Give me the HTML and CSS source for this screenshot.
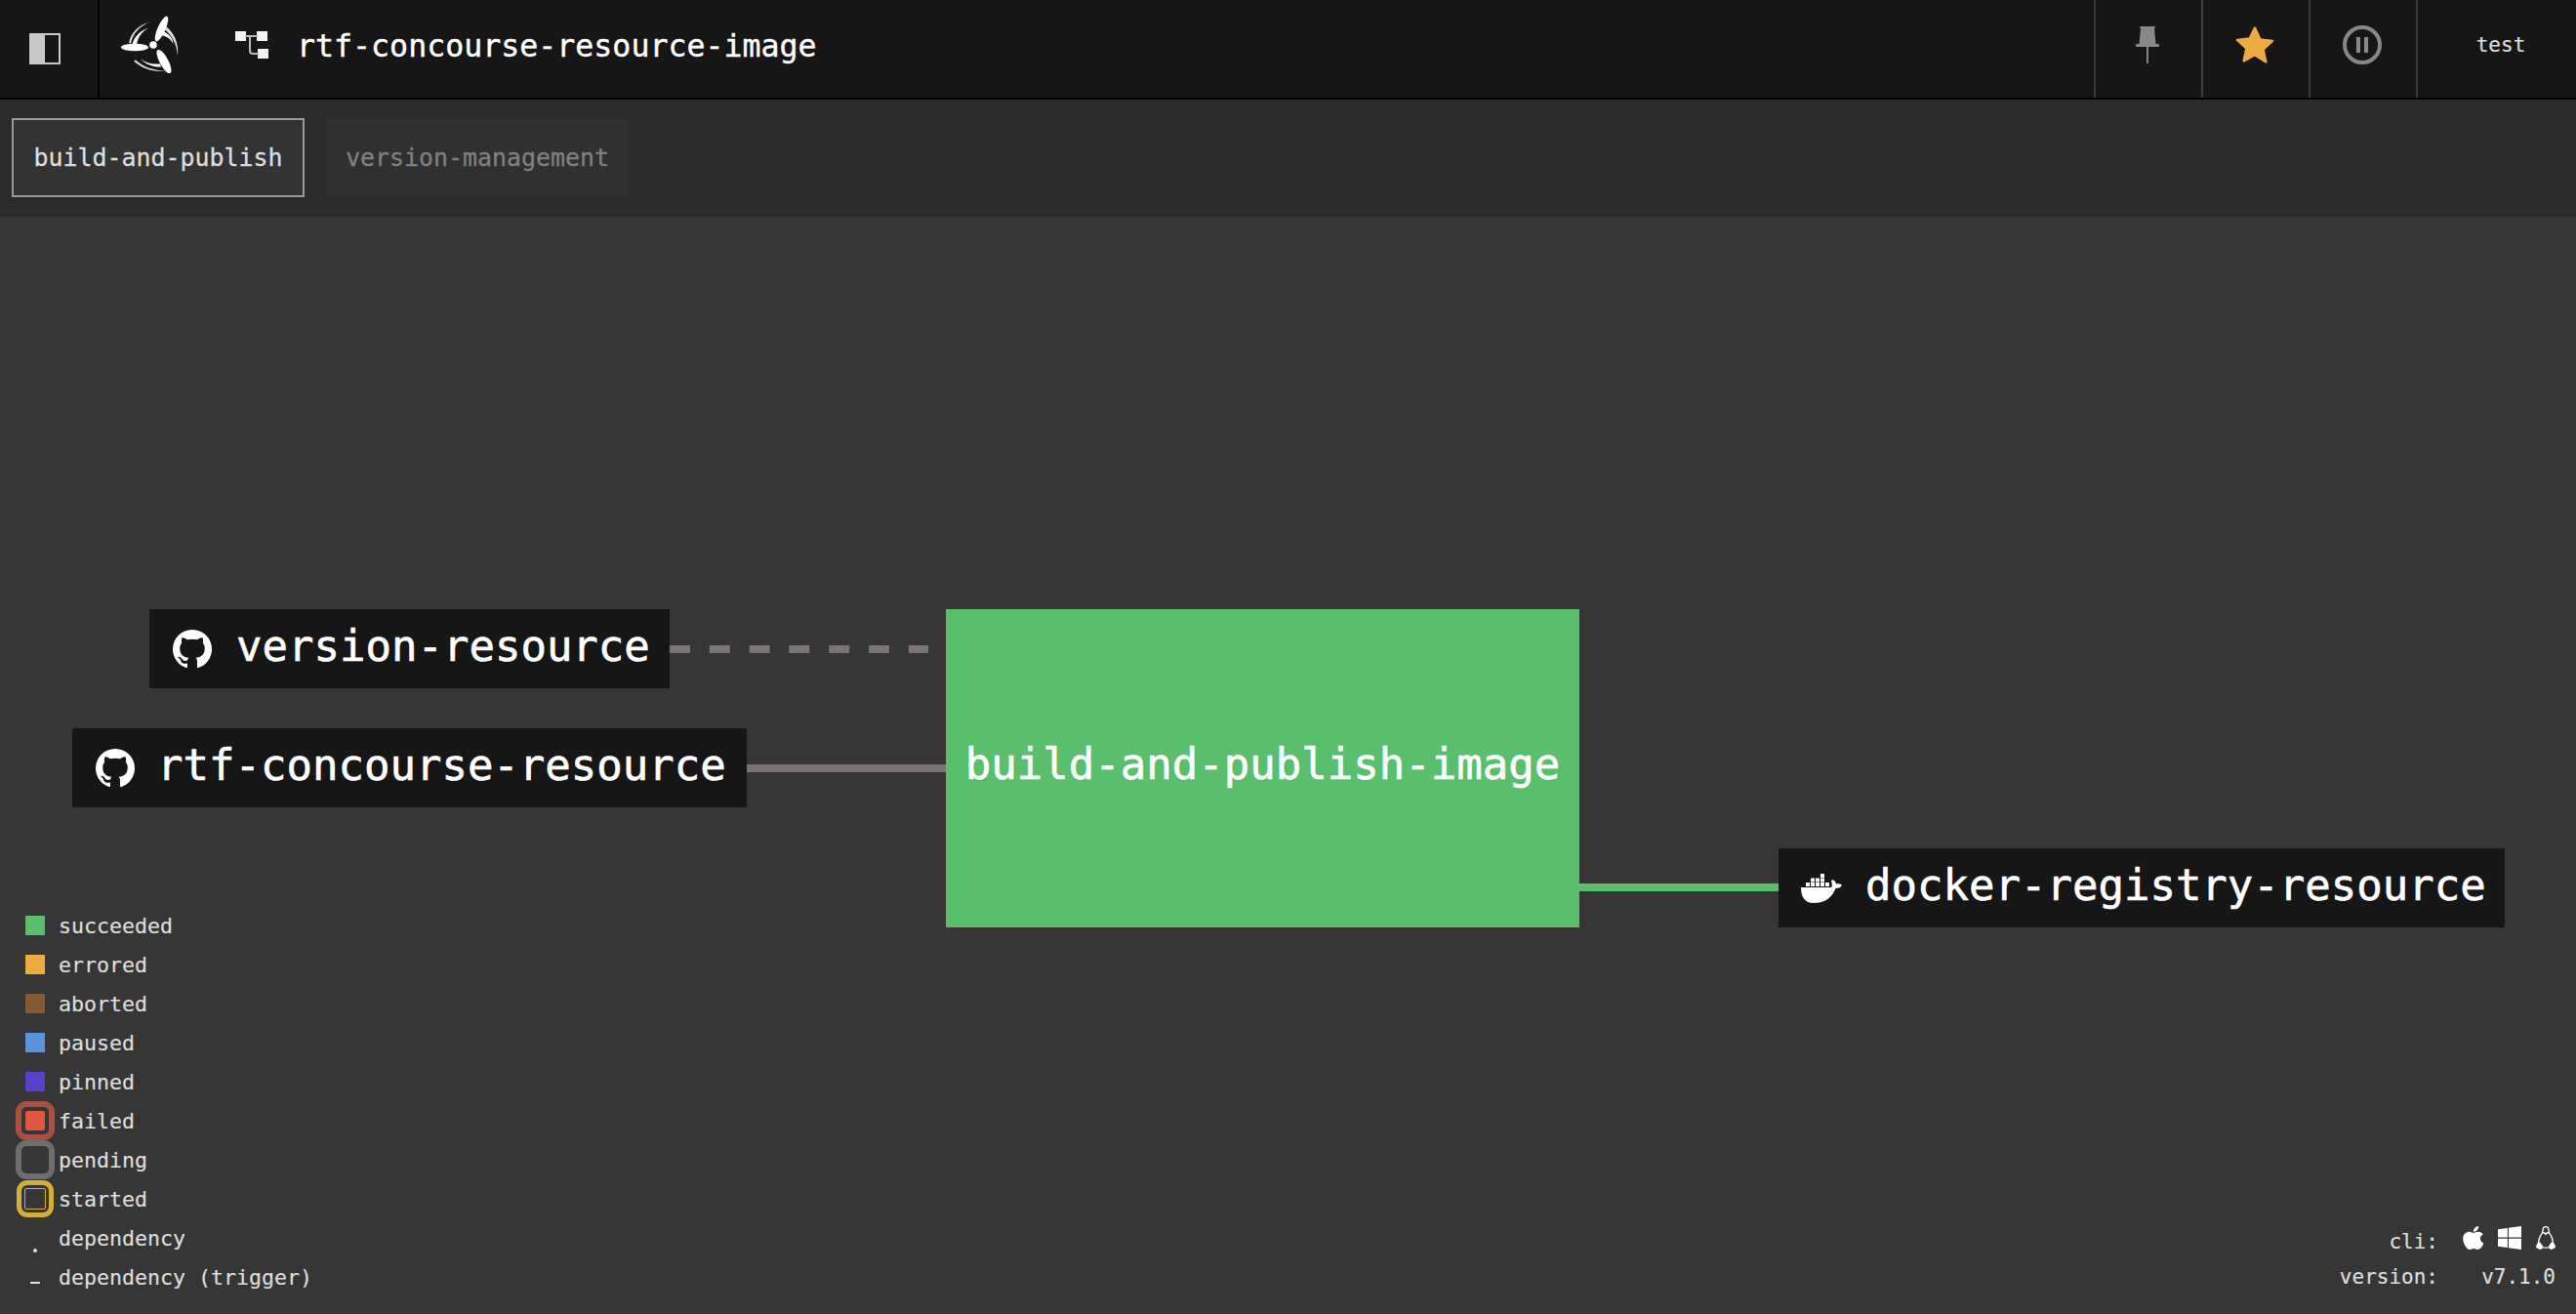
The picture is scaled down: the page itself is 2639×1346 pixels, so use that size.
FILE: index.html
```html
<!DOCTYPE html>
<html lang="en">
  <head>
    <meta charset="UTF-8" />
    <meta name="viewport" content="width=device-width, initial-scale=1.0" />
    <title>rtf-concourse-resource-image - Concourse</title>
    <link rel="stylesheet" href="styles.css">
  </head>
  <body>
    <header class="topbar">
      <div class="sidebar-toggle"><span class="toggle-icon"></span></div>
      <div class="logo">
        <svg width="62" height="60" viewBox="124 16 62 60" fill="#fff">
          <circle cx="157" cy="46" r="3.800" />
          <ellipse cx="138" cy="48.500" rx="14" ry="3.800" />
          <ellipse cx="165.500" cy="29.500" rx="4" ry="14" transform="rotate(24 165.500 29.500)" />
          <ellipse cx="168" cy="63" rx="4.500" ry="13.500" transform="rotate(-28 168 63)" />
          <!-- swirl arcs -->
          <path d="M132 44C134 33 143 25 154 22.500 144 26 136 34 134 44.500Z" opacity=".85" />
          <path d="M135.500 46C137 38 144 31 152 28.500 146 32 141 38 140 46Z" />
          <path d="M170 27C178 33 183.500 44 182 57 181 45 176 36 169 30.500Z" opacity=".85" />
          <path d="M167 32C172 34 177 38 177.500 45 175 40 171 37 165 36Z" />
          <path d="M137 62.500C146 71 158 74 170 72.500 158 72 147 69 139 61.500Z" opacity=".85" />
          <path d="M144 60C150 65 157 66 164 65.500L165 68.500C157 69 149 66 144 60Z" />
        </svg>
      </div>
      <svg class="pipeline-icon" width="34" height="30" viewBox="0 0 34 30" fill="#f2f2f2">
        <rect x="0" y="1" width="11" height="10" />
        <rect x="22" y="1" width="11" height="10" />
        <rect x="23" y="19" width="11" height="10" />
        <path d="M10 6h13M15 6v15q0 3 3 3h6" fill="none" stroke="#b9b9b9" stroke-width="2" />
      </svg>
      <h1 class="pipeline-name">rtf-concourse-resource-image</h1>
      <div class="topbar-actions">
        <div class="action">
          <svg width="24" height="38" viewBox="0 0 24 38" fill="#888">
            <rect x="4" y="0" width="16" height="2" rx="1" />
            <path d="M5 2h14l1.500 16h-17z" />
            <rect x="0" y="18" width="24" height="3" rx="1" />
            <rect x="11" y="20" width="2" height="18" />
          </svg>
        </div>
        <div class="action">
          <svg width="42" height="40" viewBox="0 0 42 40">
            <path d="M21 2.500l5.400 12 12.600 1.400-9.400 8.700 2.700 12.900L21 30.100 9.700 36.500l2.700-12.900L3 14.900l12.600-1.400z" fill="#eea940" stroke="#eea940" stroke-width="2.500" stroke-linejoin="round" />
          </svg>
        </div>
        <div class="action">
          <svg width="40" height="40" viewBox="0 0 40 40" fill="#888">
            <circle cx="20" cy="20" r="18" fill="none" stroke="#888" stroke-width="4" />
            <rect x="14" y="12" width="4" height="16" />
            <rect x="22" y="12" width="4" height="16" />
          </svg>
        </div>
        <div class="user">test</div>
      </div>
    </header>

    <nav class="groups">
      <a class="group group-active">build-and-publish</a>
      <a class="group">version-management</a>
    </nav>

    <main class="graph">
      <svg class="edges" width="2639" height="1124" viewBox="0 222 2639 1124" fill="none">
        <path class="edge-dashed" d="M686 665H951" />
        <path class="edge" d="M765 787H969" />
        <path class="edge-ok" d="M1618 909H1822" />
      </svg>

      <div class="node node-version">
        <svg class="node-icon" width="48" height="48" viewBox="0 0 24 24" fill="#fff"><path d="M12,2A10,10 0 0,0 2,12C2,16.42 4.87,20.17 8.84,21.5C9.34,21.58 9.5,21.27 9.5,21C9.5,20.77 9.5,20.14 9.5,19.31C6.73,19.91 6.14,17.97 6.14,17.97C5.68,16.81 5.03,16.5 5.03,16.5C4.12,15.88 5.1,15.9 5.1,15.9C6.1,15.97 6.63,16.93 6.63,16.93C7.5,18.45 8.97,18 9.54,17.76C9.63,17.11 9.89,16.67 10.17,16.42C7.95,16.17 5.62,15.31 5.62,11.5C5.62,10.39 6,9.5 6.65,8.79C6.55,8.54 6.2,7.5 6.75,6.15C6.75,6.15 7.59,5.88 9.5,7.17C10.29,6.95 11.15,6.84 12,6.84C12.85,6.84 13.71,6.95 14.5,7.17C16.41,5.88 17.25,6.15 17.25,6.15C17.8,7.5 17.45,8.54 17.35,8.79C18,9.5 18.38,10.39 18.38,11.5C18.38,15.32 16.04,16.16 13.81,16.41C14.17,16.72 14.5,17.33 14.5,18.26C14.5,19.6 14.5,20.68 14.5,21C14.5,21.27 14.66,21.59 15.17,21.5C19.14,20.16 22,16.42 22,12A10,10 0 0,0 12,2Z" /></svg>
        <span>version-resource</span>
      </div>
      <div class="node node-rtf">
        <svg class="node-icon" width="48" height="48" viewBox="0 0 24 24" fill="#fff"><path d="M12,2A10,10 0 0,0 2,12C2,16.42 4.87,20.17 8.84,21.5C9.34,21.58 9.5,21.27 9.5,21C9.5,20.77 9.5,20.14 9.5,19.31C6.73,19.91 6.14,17.97 6.14,17.97C5.68,16.81 5.03,16.5 5.03,16.5C4.12,15.88 5.1,15.9 5.1,15.9C6.1,15.97 6.63,16.93 6.63,16.93C7.5,18.45 8.97,18 9.54,17.76C9.63,17.11 9.89,16.67 10.17,16.42C7.95,16.17 5.62,15.31 5.62,11.5C5.62,10.39 6,9.5 6.65,8.79C6.55,8.54 6.2,7.5 6.75,6.15C6.75,6.15 7.59,5.88 9.5,7.17C10.29,6.95 11.15,6.84 12,6.84C12.85,6.84 13.71,6.95 14.5,7.17C16.41,5.88 17.25,6.15 17.25,6.15C17.8,7.5 17.45,8.54 17.35,8.79C18,9.5 18.38,10.39 18.38,11.5C18.38,15.32 16.04,16.16 13.81,16.41C14.17,16.72 14.5,17.33 14.5,18.26C14.5,19.6 14.5,20.68 14.5,21C14.5,21.27 14.66,21.59 15.17,21.5C19.14,20.16 22,16.42 22,12A10,10 0 0,0 12,2Z" /></svg>
        <span>rtf-concourse-resource</span>
      </div>
      <div class="job">build-and-publish-image</div>
      <div class="node node-docker">
        <svg class="node-icon" width="42" height="30" viewBox="0 0 42 30" fill="#fff">
          <path d="M0 14h31c1-1 1-4 0-7l1.500-1c2 1 3.500 3 3.500 4.500 2-.5 4.500 0 6 1-1 2.500-3 3.500-6.500 3.500C32 24 25 30 13 30 4 30 0 24 0 14z" />
          <g>
            <rect x="5" y="9" width="4" height="4" />
            <rect x="10" y="9" width="4" height="4" />
            <rect x="15" y="9" width="4" height="4" />
            <rect x="20" y="9" width="4" height="4" />
            <rect x="25" y="9" width="4" height="4" />
            <rect x="10" y="4.500" width="4" height="4" />
            <rect x="15" y="4.500" width="4" height="4" />
            <rect x="20" y="4.500" width="4" height="4" />
            <rect x="20" y="0" width="4" height="4" />
          </g>
        </svg>
        <span>docker-registry-resource</span>
      </div>

      <ul class="legend">
        <li><span class="key"><i class="swatch succeeded"></i></span>succeeded</li>
        <li><span class="key"><i class="swatch errored"></i></span>errored</li>
        <li><span class="key"><i class="swatch aborted"></i></span>aborted</li>
        <li><span class="key"><i class="swatch paused"></i></span>paused</li>
        <li><span class="key"><i class="swatch pinned"></i></span>pinned</li>
        <li><span class="key"><i class="ring ring-failed"><i class="swatch failed"></i></i></span>failed</li>
        <li><span class="key"><i class="ring ring-pending"></i></span>pending</li>
        <li><span class="key"><i class="ring ring-started"><i class="inner-started"></i></i></span>started</li>
        <li><span class="key"><i class="dep-dot"></i></span>dependency</li>
        <li><span class="key"><i class="dep-dash"></i></span>dependency (trigger)</li>
      </ul>

      <div class="info">
        <span>cli:</span>
        <span class="cli-icons">
          <svg width="21" height="24" viewBox="0 30 372 452" preserveAspectRatio="none" fill="#fff"><path d="M318.7 268.7c-.2-36.7 16.4-64.4 50-84.8-18.8-26.9-47.2-41.7-84.7-44.6-35.5-2.8-74.3 20.7-88.5 20.7-15 0-49.4-19.7-76.4-19.7C63.3 141.2 4 184.8 4 273.5q0 39.3 14.4 81.2c12.8 36.7 59 126.7 107.2 125.2 25.2-.6 43-17.9 75.8-17.9 31.8 0 48.3 17.9 76.4 17.9 48.6-.7 90.4-82.5 102.6-119.3-65.2-30.7-61.7-90-61.7-91.9zm-56.6-164.2c27.3-32.4 24.8-61.9 24-72.5-24.1 1.4-52 16.400-67.9 34.900-17.5 19.800-27.800 44.300-25.600 71.900 26.100 2 49.900-11.400 69.500-34.300z" /></svg>
          <svg width="24" height="24" viewBox="0 32 448 448" preserveAspectRatio="none" fill="#fff"><path d="M0 93.7l183.6-25.3v177.4H0V93.7zm0 324.6l183.6 25.3V268.4H0v149.9zm203.8 28L448 480V268.4H203.8v177.9zm0-380.6v180.1H448V32L203.8 65.7z" /></svg>
          <svg width="20" height="24" viewBox="0 0 20 24" fill="none" stroke="#fff" stroke-width="1.300" stroke-linejoin="round">
            <path d="M10 .7c-2.300 0-3 1.800-3 3.800 0 2.500-1.200 3.300-2.400 5.400-1.300 2.300-2 4.600-1.800 7.100" />
            <path d="M10 .7c2.300 0 3 1.800 3 3.800 0 2.500 1.200 3.300 2.400 5.400 1.300 2.300 2 4.600 1.800 7.100" />
            <path d="M7.300 6.500c1.500 1 3.900 1 5.400 0L10 8.300z" fill="#fff" />
            <path d="M.8 20c1-.6 1.500-2.300 2-3.400 1 .2 2.100 1.800 3.100 3.300.8 1.400.3 3-1.100 3.300-1.300.2-2.500-1-4-1.500zM19.200 20c-1-.6-1.500-2.300-2-3.400-1 .2-2.100 1.800-3.100 3.300-.8 1.400-.3 3 1.100 3.300 1.300.2 2.500-1 4-1.500z" fill="#fff" />
            <path d="M6 21.500c2.500.9 5.500.9 8 0" />
          </svg>
        </span>
        <span>version:</span>
        <span>v7.1.0</span>
      </div>
    </main>
  </body>
</html>
```

FILE: styles.css
```css
* {
  box-sizing: border-box;
}
html,
body {
  height: 100%;
}
body {
  margin: 0;
  display: flex;
  flex-direction: column;
  overflow: hidden;
  background-color: #363636;
  color: #ddd;
  font-family: "DejaVu Sans Mono", "Liberation Mono", monospace;
}

/* top bar */
.topbar {
  flex: none;
  display: flex;
  align-items: center;
  height: 102px;
  background-color: #161616;
  border-bottom: 2px solid #000;
}
.sidebar-toggle {
  display: flex;
  align-items: center;
  justify-content: center;
  width: 102px;
  height: 100px;
  padding-right: 8px;
  border-right: 2px solid #000;
}
.toggle-icon {
  width: 32px;
  height: 32px;
  border: 2px solid #c8c8c8;
  background: linear-gradient(to right, #c8c8c8 14px, transparent 14px);
}
.logo {
  display: flex;
  margin-left: 22px;
  margin-top: -8px;
}
.pipeline-icon {
  margin-left: 55px;
  margin-top: -8px;
}
.pipeline-name {
  margin: -6px 0 0 29px;
  font-size: 31.600px;
  font-weight: normal;
  color: #fff;
  -webkit-text-stroke: 0.4px #fff;
}
.topbar-actions {
  display: flex;
  height: 100px;
  margin-left: auto;
}
.action {
  display: flex;
  align-items: center;
  justify-content: center;
  width: 110px;
  padding: 0 2px 8px 0;
  border-left: 2px solid #3a3a3a;
}
.user {
  display: flex;
  align-items: center;
  justify-content: center;
  width: 164px;
  padding: 0 0 8px 8px;
  border-left: 2px solid #3a3a3a;
  font-size: 21px;
  color: #ddd;
  -webkit-text-stroke: 0.2px #ddd;
}

/* group tabs */
.groups {
  flex: none;
  display: flex;
  align-items: center;
  gap: 22px;
  height: 120px;
  padding: 0 0 2px 12px;
  background-color: #2b2b2b;
}
.group {
  display: flex;
  align-items: center;
  justify-content: center;
  width: 310px;
  height: 78px;
  background-color: #303030;
  color: #808080;
  font-size: 24.900px;
  -webkit-text-stroke: 0.3px #808080;
}
.group-active {
  width: 300px;
  height: 81px;
  border: 2px solid #999;
  background-color: #333;
  color: #ddd;
  -webkit-text-stroke: 0.3px #ddd;
}

/* graph canvas */
.graph {
  position: relative;
  flex: 1;
}
.edges {
  position: absolute;
  left: 0;
  top: 0;
}
.edge {
  stroke: #7a7574;
  stroke-width: 8;
}
.edge-dashed {
  stroke: #7a7574;
  stroke-width: 8;
  stroke-dasharray: 21 19.800;
}
.edge-ok {
  stroke: #5abf6c;
  stroke-width: 8;
}
.node {
  position: absolute;
  display: flex;
  align-items: center;
  height: 81px;
  background-color: #161616;
  color: #fff;
  font-size: 44px;
  -webkit-text-stroke: 0.6px #fff;
}
.node span {
  margin-top: -7px;
}
.node-version {
  left: 153px;
  top: 402px;
  width: 533px;
  padding-left: 20px;
}
.node-rtf {
  left: 74px;
  top: 524px;
  width: 691px;
  padding-left: 20px;
}
.node-rtf .node-icon,
.node-version .node-icon {
  margin-right: 21px;
}
.node-rtf .node-icon {
  margin-right: 19px;
}
.node-docker {
  left: 1822px;
  top: 647px;
  width: 744px;
  padding-left: 23px;
}
.node-docker .node-icon {
  margin-right: 24px;
}
.job {
  position: absolute;
  left: 969px;
  top: 402px;
  display: flex;
  align-items: center;
  justify-content: center;
  width: 649px;
  height: 326px;
  padding-bottom: 9px;
  background-color: #5abf6c;
  color: #fff;
  font-size: 44px;
  -webkit-text-stroke: 0.6px #fff;
}

/* legend */
.legend {
  position: absolute;
  left: 16px;
  bottom: 18px;
  margin: 0;
  padding: 0;
  list-style: none;
  font-size: 21.600px;
  -webkit-text-stroke: 0.2px #ddd;
}
.legend li {
  display: flex;
  align-items: center;
  height: 40px;
}
.key {
  display: flex;
  align-items: center;
  justify-content: center;
  flex: none;
  width: 40px;
  height: 40px;
  margin-right: 4px;
}
.swatch {
  display: block;
  width: 20px;
  height: 20px;
}
.succeeded { background-color: #5abf6c; }
.errored { background-color: #eea940; }
.aborted { background-color: #845a33; }
.paused { background-color: #5b92e0; }
.pinned { background-color: #5940c8; }
.failed {
  border-radius: 2px;
  background-color: #e05640;
}
.ring {
  display: flex;
  align-items: center;
  justify-content: center;
  width: 40px;
  height: 40px;
  border: 6px solid;
  border-radius: 11px;
}
.ring-failed { border-color: #a84f42; }
.ring-pending { border-color: #6e6e6e; }
.ring-started {
  width: 38px;
  height: 38px;
  border-width: 5px;
  border-color: #d5af38;
}
.inner-started {
  width: 22px;
  height: 22px;
  border: 1px solid #d5af38;
  border-radius: 2px;
}
.dep-dot {
  width: 4px;
  height: 4px;
  margin-top: 26px;
  border-radius: 50%;
  background-color: #ddd;
}
.dep-dash {
  width: 10px;
  height: 2px;
  margin-top: 12px;
  background-color: #ddd;
}

/* cli + version */
.info {
  position: absolute;
  right: 21px;
  bottom: 20px;
  display: grid;
  grid-template-columns: auto auto;
  grid-auto-rows: 36px;
  column-gap: 25px;
  align-items: center;
  justify-items: end;
  font-size: 21px;
  -webkit-text-stroke: 0.2px #ddd;
}
.cli-icons {
  display: flex;
  align-items: center;
  gap: 15px;
  margin-bottom: 8px;
}
```
